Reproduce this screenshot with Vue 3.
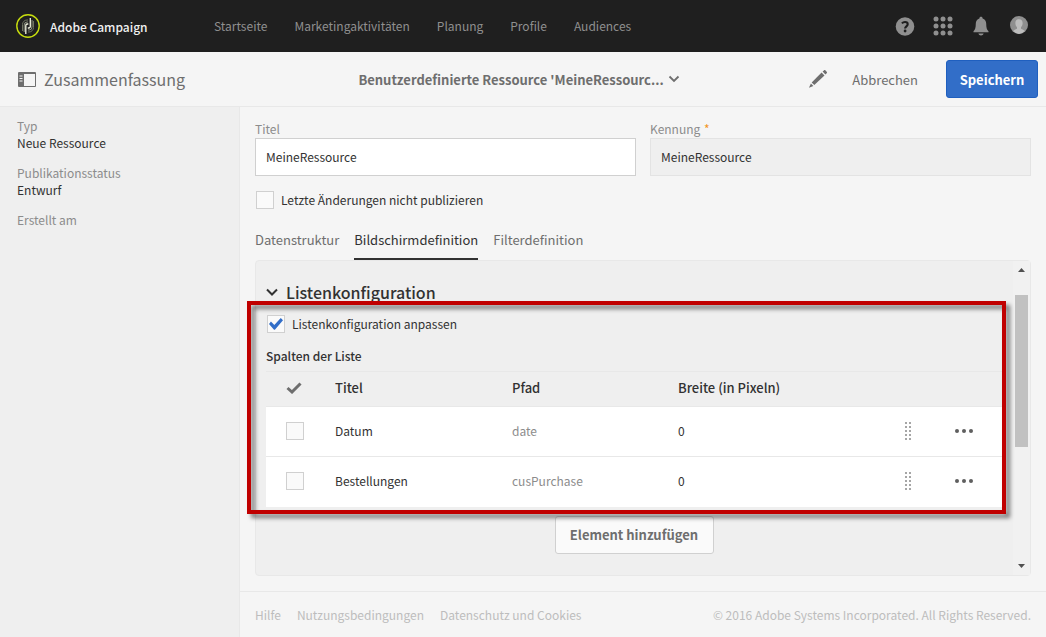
<template>
  <div class="app">
    <header class="topbar">
      <a class="brand" href="#">
        <svg class="logo" viewBox="0 0 24 24" aria-hidden="true">
          <circle cx="12" cy="12" r="11.2" fill="none" stroke="#c6dc0e" stroke-width="1.4" />
          <g fill="none" stroke-width="1">
            <path d="M6.500 17V10.500a4.500 4.500 0 0 1 4.500-4.500h1" stroke="#6f7360" />
            <path d="M8.200 18V11a3 3 0 0 1 3-3h.8" stroke="#8d917f" />
            <path d="M17.500 7v6.500a4.500 4.500 0 0 1-4.500 4.500h-1" stroke="#6f7360" />
            <path d="M16 6v7a3 3 0 0 1-3 3h-1" stroke="#8d917f" />
            <path d="M9.800 20v-8.500a1.500 1.500 0 0 1 1.500-1.500h1" stroke="#f2f4e0" stroke-width="1.300" />
            <path d="M14.300 4v8.500a1.500 1.500 0 0 1-1.500 1.500h-1" stroke="#f2f4e0" stroke-width="1.300" />
          </g>
        </svg>
        <span>Adobe Campaign</span>
      </a>
      <nav class="nav">
        <a v-for="item in navItems" :key="item" href="#">{{ item }}</a>
      </nav>
      <div class="tools">
        <button type="button" aria-label="Hilfe">
          <svg viewBox="0 0 20 20">
            <circle cx="10" cy="10.500" r="9.300" fill="#8f8f8f" />
            <path d="M6.900 7.400c.9-1 1.900-1.400 3.100-1.400 1.700 0 2.700.9 2.700 2.200 0 2.100-2.600 2.200-2.600 4.300" fill="none" stroke="#1f1f1f" stroke-width="2.100" />
            <circle cx="10.100" cy="15" r="1.400" fill="#1f1f1f" />
          </svg>
        </button>
        <button type="button" aria-label="Lösungen">
          <svg viewBox="0 0 20 20" fill="#8f8f8f">
            <template v-for="y in [3, 10, 17]" :key="y">
              <circle v-for="x in [3, 10, 17]" :key="x" :cx="x" :cy="y" r="2.500" />
            </template>
          </svg>
        </button>
        <button type="button" aria-label="Benachrichtigungen">
          <svg viewBox="0 0 20 20" fill="#8f8f8f">
            <path d="M10 .8c1 0 1.600.7 1.600 1.600 2.400.7 3.600 2.600 3.600 5.200 0 4.400.7 6.200 2.300 7.600v1.100H2.500v-1.100c1.600-1.400 2.300-3.200 2.300-7.600 0-2.600 1.200-4.500 3.600-5.200C8.400 1.500 9 .8 10 .8z" />
            <path d="M7.400 17.400h5.200c-.3 1.300-1.300 2-2.600 2s-2.300-.7-2.600-2z" />
          </svg>
        </button>
        <button type="button" aria-label="Benutzerkonto">
          <svg viewBox="0 0 20 20">
            <circle cx="10" cy="9" r="9" fill="#8f8f8f" />
            <path d="M10 3.200c2.500 0 3.800 1.700 3.600 4.200-.1 1.800-.8 3-1.600 3.800v1.600c1.600.6 2.800 1.100 3.700 2.100A9 9 0 0 1 10 18a9 9 0 0 1-5.700-3.100c.9-1 2.100-1.500 3.700-2.100v-1.600c-.8-.8-1.500-2-1.600-3.800C6.200 4.900 7.500 3.200 10 3.200z" fill="#bdbdbd" />
          </svg>
        </button>
      </div>
    </header>

    <div class="actionbar">
      <div class="summary">
        <svg class="rail-icon" viewBox="0 0 18 15">
          <rect width="18" height="15" rx="1" fill="#6e6e6e" />
          <rect x="6" y="2" width="11" height="12" fill="#f5f5f5" />
          <path d="M1.500 4h3M1.500 6.500h3M1.500 9h3" stroke="#f5f5f5" />
        </svg>
        <span>Zusammenfassung</span>
      </div>
      <button class="page-title" type="button">
        <span>Benutzerdefinierte Ressource 'MeineRessourc...</span>
        <svg class="chevron" viewBox="0 0 12 12">
          <path d="M1.500 3.500L6 8l4.500-4.500" fill="none" stroke="#6e6e6e" stroke-width="1.800" />
        </svg>
      </button>
      <div class="actions">
        <button class="edit" type="button" aria-label="Bearbeiten">
          <svg viewBox="0 0 20 20" fill="#6e6e6e">
            <path d="M14.600 2.600l1.300-1.200c.6-.5 1.100-.5 1.600 0l1.200 1.300c.5.500.5 1 0 1.600l-1.300 1.200z" />
            <path d="M13.600 3.600l2.900 2.900L6.300 16.100l-2.600-2.600z" />
            <path d="M2.900 14.500l2.500 2.500-4.400 1.800z" />
          </svg>
        </button>
        <button class="cancel" type="button">Abbrechen</button>
        <button class="save" type="button">Speichern</button>
      </div>
    </div>

    <div class="body">
      <aside class="sidebar">
        <dl>
          <div v-for="entry in summary" :key="entry.label" class="entry">
            <dt>{{ entry.label }}</dt>
            <dd v-if="entry.value">{{ entry.value }}</dd>
          </div>
        </dl>
      </aside>

      <div class="content">
        <main class="form">
          <div class="fields">
            <div class="field">
              <label for="title">Titel</label>
              <input id="title" v-model="title" type="text" />
            </div>
            <div class="field">
              <label for="ident">Kennung <span class="required">*</span></label>
              <input id="ident" value="MeineRessource" type="text" disabled />
            </div>
          </div>

          <label class="check publish">
            <input v-model="skipPublish" type="checkbox" />
            <span>Letzte Änderungen nicht publizieren</span>
          </label>

          <div class="tabs" role="tablist">
            <button
              v-for="tab in tabs"
              :key="tab"
              type="button"
              role="tab"
              class="tab"
              :class="{ active: tab === activeTab }"
              :aria-selected="tab === activeTab"
              @click="activeTab = tab"
            >
              {{ tab }}
            </button>
          </div>

          <section class="panel">
            <div class="panel-content">
              <h2 class="section-title">
                <svg class="chevron" viewBox="0 0 12 12">
                  <path d="M1 3.500l5 5 5-5" fill="none" stroke="#323232" stroke-width="2" />
                </svg>
                Listenkonfiguration
              </h2>

              <div class="list-config">
                <label class="check">
                  <input v-model="customList" type="checkbox" />
                  <span>Listenkonfiguration anpassen</span>
                </label>
                <h3 class="list-title">Spalten der Liste</h3>
                <table class="columns">
                  <colgroup>
                    <col class="col-check" />
                    <col class="col-title" />
                    <col class="col-path" />
                    <col />
                    <col class="col-drag" />
                    <col class="col-more" />
                  </colgroup>
                  <thead>
                    <tr>
                      <th class="select-cell">
                        <svg class="tick" viewBox="0 0 16 12">
                          <path d="M1.500 6l4.500 4L14.500 1.500" fill="none" stroke="#6e6e6e" stroke-width="3" />
                        </svg>
                      </th>
                      <th>Titel</th>
                      <th>Pfad</th>
                      <th>Breite (in Pixeln)</th>
                      <th></th>
                      <th></th>
                    </tr>
                  </thead>
                  <tbody>
                    <tr v-for="row in rows" :key="row.path">
                      <td class="select-cell">
                        <input v-model="row.selected" type="checkbox" :aria-label="row.title" />
                      </td>
                      <td>{{ row.title }}</td>
                      <td class="path">{{ row.path }}</td>
                      <td>{{ row.width }}</td>
                      <td class="icon-cell">
                        <svg class="drag" viewBox="0 0 6 18" fill="#a6a6a6">
                          <template v-for="n in 5" :key="n">
                            <rect x="0" :y="(n - 1) * 4" width="2" height="2" />
                            <rect x="4" :y="(n - 1) * 4" width="2" height="2" />
                          </template>
                        </svg>
                      </td>
                      <td class="icon-cell">
                        <button class="more" type="button" aria-label="Mehr">
                          <svg viewBox="0 0 18 4" fill="#5f5f5f">
                            <circle cx="2" cy="2" r="2" />
                            <circle cx="9" cy="2" r="2" />
                            <circle cx="16" cy="2" r="2" />
                          </svg>
                        </button>
                      </td>
                    </tr>
                  </tbody>
                </table>
                <div class="highlight"></div>
              </div>

              <button class="add" type="button">Element hinzufügen</button>
            </div>

            <div class="scrollbar">
              <svg viewBox="0 0 7 4"><path d="M0 4L3.500 0 7 4z" fill="#505050" /></svg>
              <div class="track"><div class="thumb"></div></div>
              <svg viewBox="0 0 7 4"><path d="M0 0l3.500 4L7 0z" fill="#505050" /></svg>
            </div>
          </section>
        </main>

        <footer class="footer">
          <nav class="footer-links">
            <a v-for="link in footerLinks" :key="link" href="#">{{ link }}</a>
          </nav>
          <span>© 2016 Adobe Systems Incorporated. All Rights Reserved.</span>
        </footer>
      </div>
    </div>
  </div>
</template>

<script setup>
import { ref } from "vue";

const navItems = ["Startseite", "Marketingaktivitäten", "Planung", "Profile", "Audiences"];
const tabs = ["Datenstruktur", "Bildschirmdefinition", "Filterdefinition"];
const footerLinks = ["Hilfe", "Nutzungsbedingungen", "Datenschutz und Cookies"];

const summary = [
  { label: "Typ", value: "Neue Ressource" },
  { label: "Publikationsstatus", value: "Entwurf" },
  { label: "Erstellt am", value: "" },
];

const title = ref("MeineRessource");
const skipPublish = ref(false);
const customList = ref(true);
const activeTab = ref("Bildschirmdefinition");

const rows = ref([
  { title: "Datum", path: "date", width: 0, selected: false },
  { title: "Bestellungen", path: "cusPurchase", width: 0, selected: false },
]);
</script>

<style>
body {
  background: #f5f5f5;
}
</style>

<style scoped>
* {
  box-sizing: border-box;
}
.app {
  display: flex;
  flex-direction: column;
  min-height: 100vh;
  font-family: "Noto Sans CJK SC", "Open Sans", sans-serif;
  font-size: 12px;
  line-height: 17px;
  color: #323232;
  background: #f5f5f5;
}
a {
  color: inherit;
  text-decoration: none;
}
button {
  padding: 0;
  border: 0;
  background: none;
  font: inherit;
  color: inherit;
  cursor: pointer;
}
svg {
  display: block;
}

/* Top navigation */
.topbar {
  display: flex;
  align-items: center;
  height: 52px;
  padding: 0 17px 0 16px;
  background: #1f1f1f;
  color: #8f8f8f;
}
.brand {
  display: flex;
  align-items: center;
  gap: 10px;
  width: 198px;
  font-weight: 500;
  color: #f0f0f0;
}
.logo {
  width: 24px;
  height: 24px;
}
.nav {
  display: flex;
  gap: 27px;
  padding-bottom: 2px;
}
.tools {
  display: flex;
  gap: 18px;
  margin-left: auto;
}
.tools svg {
  width: 20px;
  height: 20px;
}

/* Action bar */
.actionbar {
  display: grid;
  grid-template-columns: minmax(0, 1fr) auto minmax(0, 1fr);
  align-items: center;
  height: 55px;
  padding-right: 8px;
  border-bottom: 1px solid #e8e8e8;
  color: #6e6e6e;
}
.summary {
  display: flex;
  align-items: center;
  gap: 8px;
  padding-left: 18px;
  font-size: 16px;
  line-height: 24px;
}
.rail-icon {
  width: 18px;
  height: 15px;
}
.page-title {
  display: flex;
  align-items: center;
  gap: 4px;
  font-size: 13px;
  font-weight: 700;
}
.chevron {
  width: 12px;
  height: 12px;
}
.actions {
  display: flex;
  align-items: center;
  justify-content: flex-end;
  font-size: 13px;
}
.edit svg {
  width: 20px;
  height: 20px;
}
.cancel {
  margin: 0 28px 0 24px;
}
.save {
  width: 92px;
  height: 38px;
  border: 1px solid #1f5fbf;
  border-radius: 3px;
  background: #326ec8;
  font-weight: 700;
  color: #fff;
}

/* Sidebar */
.body {
  display: flex;
  flex: 1;
}
.sidebar {
  flex: none;
  width: 240px;
  padding: 10px 17px;
  border-right: 1px solid #e8e8e8;
  background: #efefef;
}
dl,
dd {
  margin: 0;
}
.entry {
  margin-bottom: 13px;
}
dt {
  color: #8c8c8c;
}

/* Form */
.content {
  display: flex;
  flex: 1;
  flex-direction: column;
  min-width: 0;
}
.form {
  display: flex;
  flex: 1;
  flex-direction: column;
  padding: 13px 15px 15px;
}
.fields {
  display: grid;
  grid-template-columns: 1fr 1fr;
  gap: 14px;
}
.field label {
  display: block;
  margin-bottom: 1px;
  color: #8c8c8c;
}
.required {
  margin-left: 1px;
  color: #f29423;
}
.field input {
  display: block;
  width: 100%;
  height: 38px;
  padding: 0 10px 2px;
  border: 1px solid #d0d0d0;
  background: #fff;
  font: inherit;
  color: #323232;
}
.field input:disabled {
  border-color: #e3e3e3;
  background: #efefef;
}
.check {
  display: flex;
  align-items: center;
  gap: 7px;
  padding-left: 1px;
}
.check span {
  padding-bottom: 1px;
}
.publish {
  margin-top: 15px;
}
input[type="checkbox"] {
  flex: none;
  width: 18px;
  height: 18px;
  margin: 0;
  appearance: none;
  border: 1px solid #d0d0d0;
  background: #fafafa;
}
input[type="checkbox"]:checked::before {
  content: "";
  display: block;
  width: 14px;
  height: 12px;
  margin: 2px 1px;
  background: #326ec8;
  clip-path: polygon(0 50%, 14% 30%, 38% 58%, 84% 0, 100% 18%, 42% 98%, 36% 98%);
}
.tabs {
  display: flex;
  gap: 15px;
  margin-top: 14px;
}
.tab {
  height: 37px;
  padding-bottom: 3px;
  border-bottom: 2px solid transparent;
  font-size: 13px;
  color: #6e6e6e;
}
.tab.active {
  border-bottom-color: #323232;
  color: #323232;
}

/* Scrolling panel */
.panel {
  display: flex;
  flex: 1;
  border: 1px solid #e8e8e8;
  border-radius: 4px;
  background: #efefef;
}
.panel-content {
  display: flex;
  flex: 1;
  flex-direction: column;
  min-width: 0;
  padding: 19px 11px 21px 10px;
}
.section-title {
  display: flex;
  align-items: center;
  gap: 8px;
  margin: 0;
  font-size: 16px;
  line-height: 24px;
  font-weight: 500;
}
.list-config {
  position: relative;
  padding-top: 11px;
}
.list-title {
  margin: 14px 0 7px;
  font-size: 12px;
  font-weight: 500;
}
.columns {
  width: 100%;
  table-layout: fixed;
  border-collapse: collapse;
}
.col-check {
  width: 69px;
}
.col-title {
  width: 177px;
}
.col-path {
  width: 166px;
}
.col-drag {
  width: 36px;
}
.col-more {
  width: 76px;
}
.columns th {
  height: 35px;
  padding: 0 0 3px;
  border-top: 1px solid #e8e8e8;
  font-size: 13px;
  font-weight: 500;
  text-align: left;
}
.columns td {
  height: 50px;
  padding: 0 0 2px;
  border-top: 1px solid #e8e8e8;
  background: #fff;
}
.columns .select-cell {
  padding-left: 20px;
}
.columns .path {
  color: #8c8c8c;
}
.tick {
  width: 16px;
  height: 12px;
}
.select-cell input {
  display: block;
}
.icon-cell {
  text-align: center;
}
.drag {
  width: 6px;
  height: 18px;
  margin: 0 auto;
}
.more {
  display: block;
  margin: 0 auto;
}
.more svg {
  width: 18px;
  height: 4px;
}
.highlight {
  position: absolute;
  inset: -3px -4px -7px -19px;
  border: 4px solid #c00000;
  filter: drop-shadow(4px 4px 2px rgba(0, 0, 0, 0.5));
  pointer-events: none;
}
.add {
  align-self: center;
  width: 159px;
  height: 38px;
  margin-top: 9px;
  border: 1px solid #d0d0d0;
  border-radius: 3px;
  background: #fafafa;
  font-size: 13px;
  font-weight: 700;
  color: #6e6e6e;
}
.scrollbar {
  display: flex;
  flex-direction: column;
  align-items: center;
  width: 17px;
  padding: 7px 2px;
  background: #f1f1f1;
}
.scrollbar svg {
  width: 7px;
  height: 4px;
}
.track {
  flex: 1;
  width: 100%;
  padding-top: 23px;
}
.thumb {
  height: 152px;
  background: #c1c1c1;
}

/* Footer */
.footer {
  display: flex;
  align-items: center;
  justify-content: space-between;
  height: 46px;
  padding: 0 15px;
  border-top: 1px solid #e8e8e8;
  color: #bdbdbd;
}
.footer-links {
  display: flex;
  gap: 16px;
}
</style>
